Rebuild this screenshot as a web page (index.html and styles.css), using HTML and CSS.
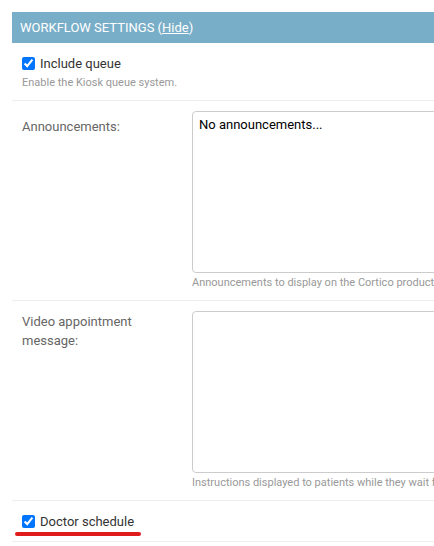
FILE: index.html
```html
<!DOCTYPE html>
<html>
<head>
<meta charset="utf-8">
<link rel="stylesheet" href="styles.css">
</head>
<body>
<div class="page">
  <fieldset class="module">
    <h2 class="module-title">Workflow Settings (<a class="toggle" href="#">Hide</a>)</h2>

    <div class="form-row">
      <div class="checkbox-row">
        <input type="checkbox" class="check" checked>
        <label class="check-label">Include queue</label>
      </div>
      <div class="help help-left">Enable the Kiosk queue system.</div>
    </div>

    <div class="form-row field-line">
      <label class="field-label">Announcements:</label>
      <div class="field-body">
        <textarea class="text-area">No announcements...</textarea>
        <div class="help">Announcements to display on the Cortico product to patients and staff</div>
      </div>
    </div>

    <div class="form-row field-line">
      <label class="field-label field-label-wrap">Video appointment message:</label>
      <div class="field-body">
        <textarea class="text-area"></textarea>
        <div class="help">Instructions displayed to patients while they wait for their video appointment</div>
      </div>
    </div>

    <div class="form-row last-row">
      <div class="checkbox-row">
        <input type="checkbox" class="check" checked>
        <label class="check-label">Doctor schedule</label>
      </div>
      <span class="red-mark"></span>
    </div>
  </fieldset>
</div>
</body>
</html>
```

FILE: styles.css
```css
html, body {
  margin: 0;
  padding: 0;
  background: #fff;
  overflow: hidden;
}

body {
  font-family: Roboto, "Liberation Sans", sans-serif;
  font-size: 13px;
  color: #333;
}

.page {
  padding: 12px 0 0 12px;
  overflow: hidden;
}

.module {
  margin: 0;
  padding: 0;
  border: none;
  min-width: 0;
  width: 700px;
}

.module-title {
  margin: 0;
  padding: 8px;
  font-size: 13px;
  font-weight: 400;
  line-height: 15px;
  text-transform: uppercase;
  background: #79aec8;
  color: #fff;
}

.toggle {
  color: #fff;
  text-decoration: underline;
  text-transform: none;
}

.form-row {
  padding: 10px;
  border-bottom: 1px solid #eee;
}

.checkbox-row {
  display: flex;
  align-items: center;
  height: 20px;
}

.check {
  margin: 0;
  width: 13px;
  height: 13px;
}

.check-label {
  padding-left: 5px;
  color: #333;
  font-size: 13px;
}

.help {
  margin-top: 3px;
  font-size: 11px;
  line-height: 14px;
  color: #999;
  white-space: nowrap;
}

.field-line {
  display: flex;
}

.field-label {
  flex: 0 0 160px;
  padding: 6px 10px 0 0;
  line-height: 19px;
  color: #666;
}

.field-label-wrap {
  padding-top: 1px;
}

.field-body {
  display: flex;
  flex-direction: column;
}

.text-area {
  display: block;
  box-sizing: border-box;
  width: 610px;
  height: 162px;
  margin: 0;
  padding: 5px 6px;
  border: 1px solid #ccc;
  border-radius: 4px;
  font-family: Roboto, "Liberation Sans", sans-serif;
  font-size: 13px;
  color: #000;
  resize: none;
}

.last-row {
  position: relative;
}

.red-mark {
  position: absolute;
  left: 3px;
  top: 31px;
  width: 126px;
  height: 4px;
  border-radius: 2px;
  background: #e01b1b;
}
```
